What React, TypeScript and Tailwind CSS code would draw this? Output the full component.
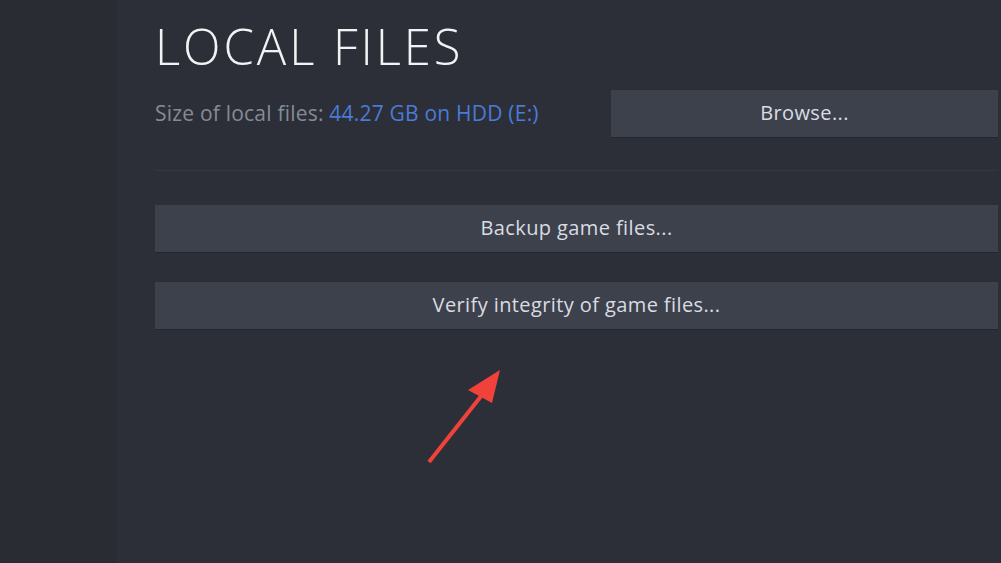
import React from 'react';

function ActionButton({ label, className = '' }: { label: string; className?: string }) {
  return (
    <button className={`h-[47px] bg-[#3d414c] text-[#d9dce2] text-[20px] tracking-[0.02em] shadow-[0_1px_0_#23262d] ${className}`}>
      {label}
    </button>
  );
}

export default function App() {
  return (
    <div
      className="relative w-[1001px] h-[563px] overflow-hidden flex bg-[#2a2d35]"
      style={{ fontFamily: '"Open Sans", "Noto Sans", sans-serif' }}
    >
      {/* left rail */}
      <div className="w-[118px] shrink-0 bg-[#292c33]" />

      {/* settings panel */}
      <div className="flex-1 bg-[#2c2f38] pl-[37px] pt-[17px]">
        <h1 className="text-[49px] font-light tracking-[0.06em] text-[#f2f3f5] leading-[1.2]">LOCAL FILES</h1>

        <div className="flex items-center mt-[14px]">
          <p className="w-[456px] text-[21px] tracking-[0.01em] text-[#858b96]">
            Size of local files: <span className="text-[#4a7bd6]">44.27 GB on HDD (E:)</span>
          </p>
          <ActionButton label="Browse..." className="w-[387px]" />
        </div>

        <div className="h-px bg-[#343741] mt-[33px] mr-[3px]" />

        <div className="flex flex-col gap-[30px] mt-[34px] pr-[3px]">
          <ActionButton label="Backup game files..." className="w-full" />
          <ActionButton label="Verify integrity of game files..." className="w-full" />
        </div>
      </div>

      {/* annotation arrow */}
      <svg className="absolute left-[420px] top-[360px]" width="90" height="110" viewBox="0 0 90 110">
        <line x1="9" y1="102" x2="62" y2="35" stroke="#f0423a" strokeWidth="4" />
        <polygon points="80,10 48,30 72,43" fill="#f0423a" />
      </svg>
    </div>
  );
}
